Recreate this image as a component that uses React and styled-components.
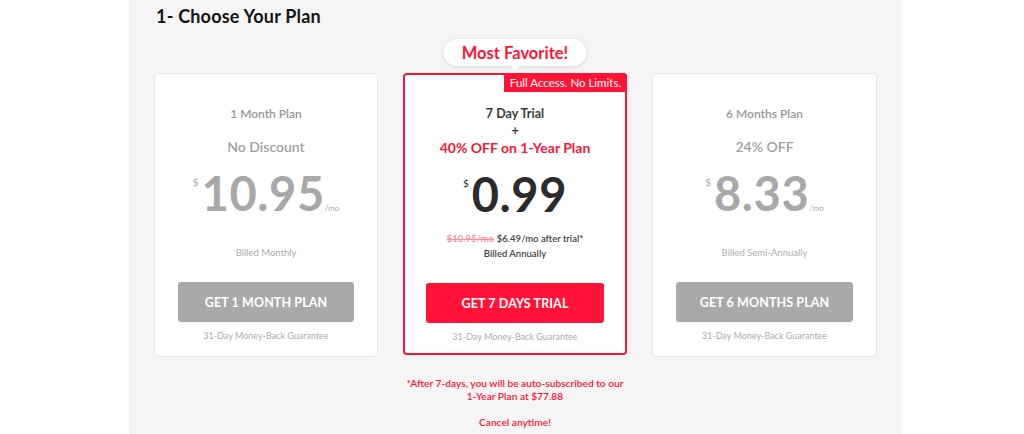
import React from "react";
import styled, { createGlobalStyle } from "styled-components";

const Global = createGlobalStyle`
  html, body { margin: 0; padding: 0; background: #ffffff; }
  body { font-family: Lato, "Noto Sans", Arial, sans-serif; }
  * { box-sizing: border-box; }
`;

const RED = "#ff1438";

const Page = styled.div`
  display: flex;
  width: 1024px;
  height: 434px;
  overflow: hidden;
`;

const Panel = styled.section`
  margin-left: 129px;
  width: 772px;
  height: 434px;
  background: #f5f5f5;
  padding: 5px 25px 0;
`;

const Title = styled.h1`
  margin: 0 0 0 2px;
  font-size: 18px;
  line-height: 22px;
  font-weight: 700;
  color: #141414;
  letter-spacing: 0.2px;
`;

const Grid = styled.div`
  display: grid;
  grid-template-columns: 224px 224px 225px;
  column-gap: 25px;
  margin-top: 46px;
`;

const Card = styled.div`
  position: relative;
  height: ${(p) => (p.$featured ? 282 : 284)}px;
  background: #ffffff;
  border: ${(p) => (p.$featured ? `2px solid ${RED}` : "1px solid #e6e6e6")};
  border-radius: 4px;
  display: flex;
  flex-direction: column;
  align-items: center;
  padding: ${(p) => (p.$featured ? "30px 21px 0" : "32px 23px 0")};
`;

const Header = styled.div`
  height: ${(p) => (p.$featured ? 66 : 64)}px;
  display: flex;
  flex-direction: column;
  align-items: center;
`;

const PlanName = styled.div`
  font-size: 12px;
  line-height: 16px;
  font-weight: 600;
  color: #969696;
`;

const Discount = styled.div`
  margin-top: 16px;
  font-size: 14px;
  line-height: 18px;
  font-weight: 600;
  color: #a0a0a0;
`;

const TrialLine = styled.div`
  font-size: ${(p) => (p.$red ? 14 : 12.5)}px;
  line-height: 17px;
  font-weight: 700;
  color: ${(p) => (p.$red ? RED : "#3a3a3a")};
`;

const PriceRow = styled.div`
  display: flex;
  align-items: baseline;
  height: 46px;
  color: ${(p) => (p.$dark ? "#2b2b2b" : "#a8a8a8")};
`;

const Currency = styled.span`
  align-self: flex-start;
  margin-top: 6px;
  margin-right: 3px;
  font-size: 10px;
  line-height: 12px;
  font-weight: 400;
`;

const Amount = styled.span`
  font-size: 47px;
  line-height: 46px;
  font-weight: 700;
  letter-spacing: 0.6px;
`;

const PerMonth = styled.span`
  margin-left: 0;
  font-size: 8px;
  font-weight: 400;
`;

const Notes = styled.div`
  height: 44px;
  display: flex;
  flex-direction: column;
  justify-content: flex-end;
  align-items: center;
`;

const Note = styled.div`
  font-size: 9.5px;
  line-height: 15px;
  color: ${(p) => (p.$dark ? "#444" : "#ababab")};
  font-weight: ${(p) => (p.$dark ? 600 : 400)};
`;

const Strike = styled.span`
  color: #ff8a9a;
  text-decoration: line-through;
  margin-right: 3px;
`;

const Button = styled.button`
  margin-top: 22px;
  width: 100%;
  height: 40px;
  border: none;
  border-radius: 3px;
  background: ${(p) => (p.$primary ? RED : "#a9a9a9")};
  color: #ffffff;
  font-family: inherit;
  font-size: 12.5px;
  font-weight: 700;
  letter-spacing: 0.1px;
  cursor: pointer;
`;

const Guarantee = styled.div`
  margin-top: 7px;
  font-size: 9px;
  line-height: 14px;
  color: #adadad;
`;

const Bubble = styled.div`
  position: absolute;
  top: -36px;
  left: 50%;
  transform: translateX(-50%);
  width: 143px;
  height: 27px;
  border-radius: 14px;
  background: #ffffff;
  box-shadow: 0 1px 4px rgba(0, 0, 0, 0.14);
  display: flex;
  align-items: center;
  justify-content: center;
  color: ${RED};
  font-size: 16.5px;
  font-weight: 700;

  &::after {
    content: "";
    position: absolute;
    left: 50%;
    bottom: -5px;
    margin-left: -5px;
    border-left: 5px solid transparent;
    border-right: 5px solid transparent;
    border-top: 5px solid #ffffff;
  }
`;

const Tab = styled.div`
  position: absolute;
  top: -2px;
  right: -2px;
  width: 123px;
  height: 19px;
  background: ${RED};
  border-top-right-radius: 4px;
  color: #ffffff;
  font-size: 11.5px;
  line-height: 19px;
  text-align: center;
`;

const Footnote = styled.p`
  grid-column: 2;
  margin: 20px 0 0;
  text-align: center;
  color: ${RED};
  font-size: 10.2px;
  line-height: 13px;
  font-weight: 600;
`;

const plans = [
  { name: "1 Month Plan", discount: "No Discount", price: "10.95", note: "Billed Monthly", cta: "GET 1 MONTH PLAN" },
  null,
  { name: "6 Months Plan", discount: "24% OFF", price: "8.33", note: "Billed Semi-Annually", cta: "GET 6 MONTHS PLAN" },
];

function PlainCard({ plan }) {
  return (
    <Card>
      <Header>
        <PlanName>{plan.name}</PlanName>
        <Discount>{plan.discount}</Discount>
      </Header>
      <PriceRow>
        <Currency>$</Currency>
        <Amount>{plan.price}</Amount>
        <PerMonth>/mo</PerMonth>
      </PriceRow>
      <Notes>
        <Note>{plan.note}</Note>
      </Notes>
      <Button>{plan.cta}</Button>
      <Guarantee>31-Day Money-Back Guarantee</Guarantee>
    </Card>
  );
}

function FeaturedCard() {
  return (
    <Card $featured>
      <Bubble>Most Favorite!</Bubble>
      <Tab>Full Access. No Limits.</Tab>
      <Header $featured>
        <TrialLine>7 Day Trial</TrialLine>
        <TrialLine>+</TrialLine>
        <TrialLine $red>40% OFF on 1-Year Plan</TrialLine>
      </Header>
      <PriceRow $dark>
        <Currency>$</Currency>
        <Amount>0.99</Amount>
      </PriceRow>
      <Notes>
        <Note $dark>
          <Strike>$10.95/mo</Strike>$6.49/mo after trial*
        </Note>
        <Note $dark>Billed Annually</Note>
      </Notes>
      <Button $primary>GET 7 DAYS TRIAL</Button>
      <Guarantee>31-Day Money-Back Guarantee</Guarantee>
    </Card>
  );
}

export default function App() {
  return (
    <Page>
      <Global />
      <Panel>
        <Title>1- Choose Your Plan</Title>
        <Grid>
          <PlainCard plan={plans[0]} />
          <FeaturedCard />
          <PlainCard plan={plans[2]} />
          <Footnote>
            *After 7-days, you will be auto-subscribed to our
            <br />
            1-Year Plan at $77.88
            <br />
            <br />
            Cancel anytime!
          </Footnote>
        </Grid>
      </Panel>
    </Page>
  );
}
